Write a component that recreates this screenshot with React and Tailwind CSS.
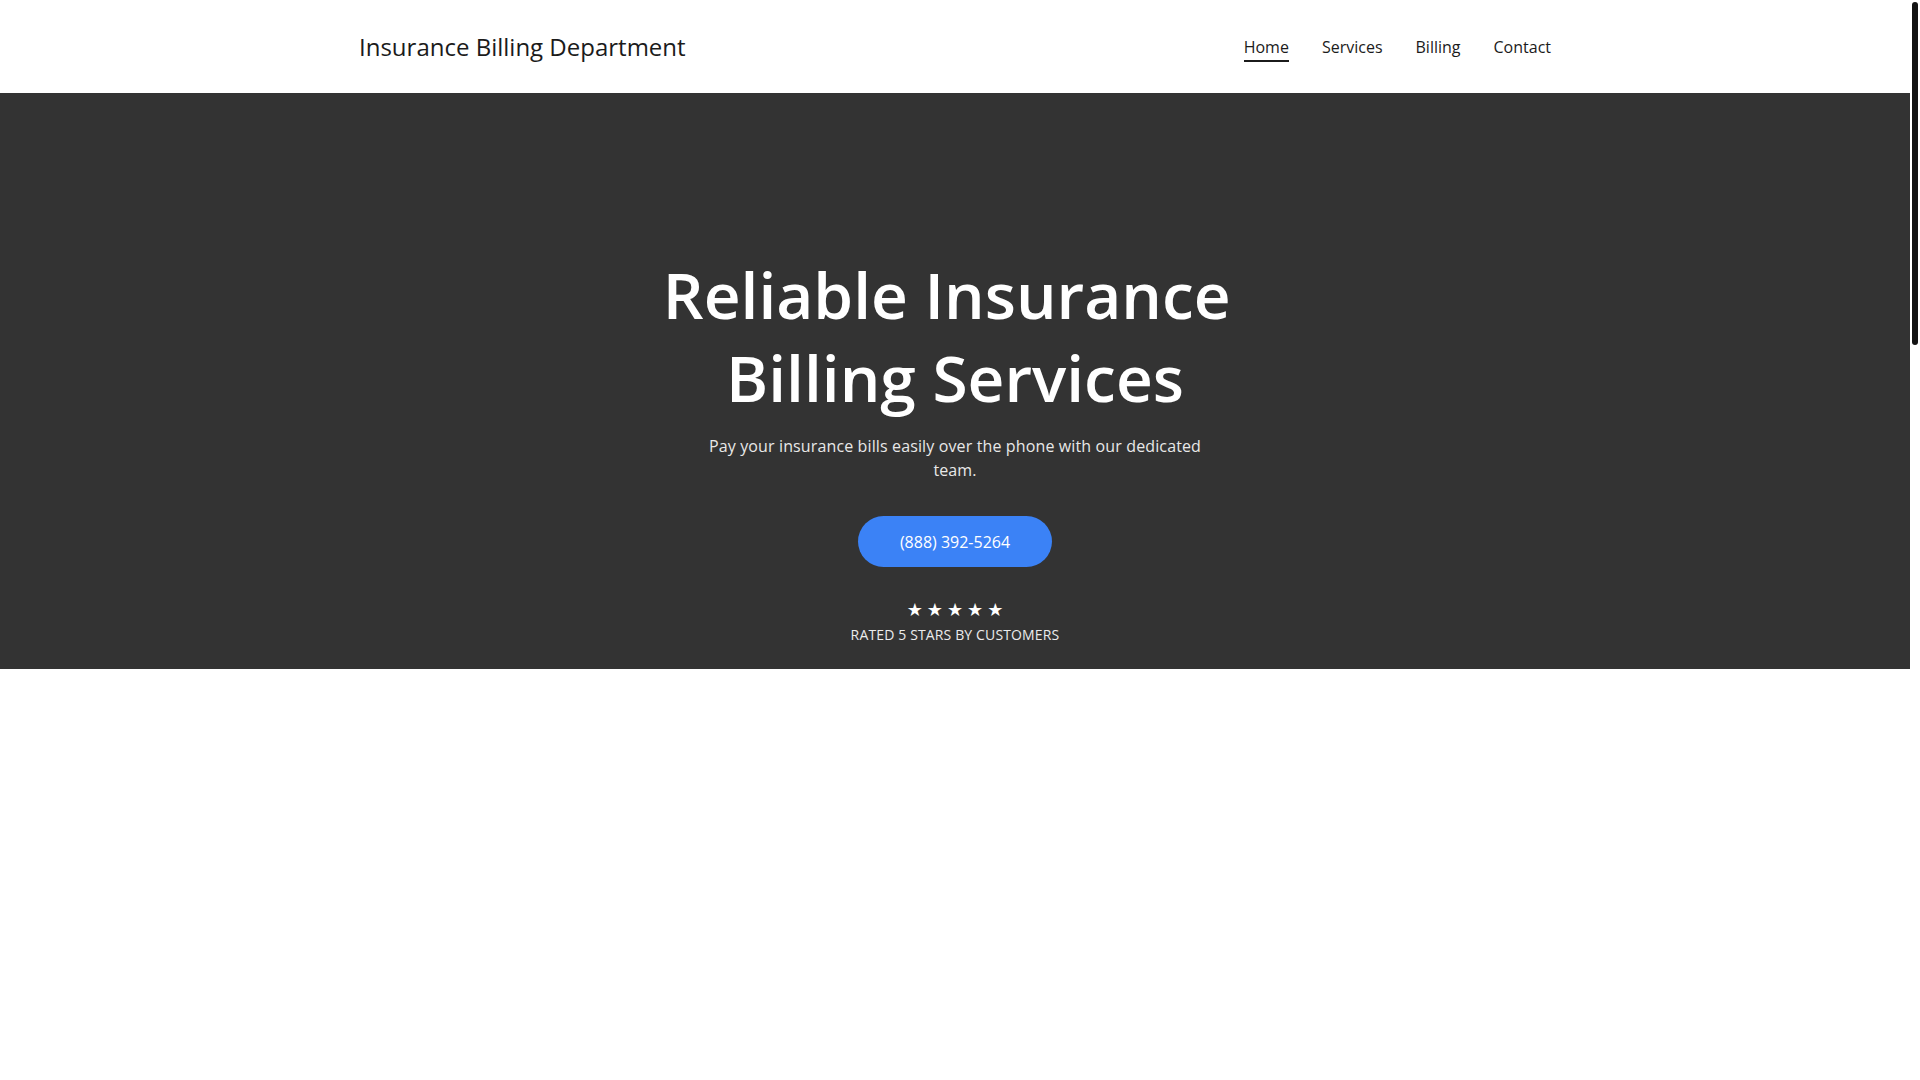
const links = [
  { label: 'Home', active: true },
  { label: 'Services' },
  { label: 'Billing' },
  { label: 'Contact' },
];

export default function App() {
  return (
    <div className="flex min-h-screen bg-white font-['Open_Sans',sans-serif] text-[#1b1b1b]">
      <main className="min-w-0 flex-1">
        {/* Header */}
        <header className="h-[93px]">
          <div className="mx-auto flex h-full max-w-[1192px] items-center justify-between">
            <a href="#" className="text-[24px] leading-8 text-[#1b1b1b]">
              Insurance Billing Department
            </a>
            <nav className="mt-1 flex items-center gap-[33px]">
              {links.map((link) => (
                <a
                  key={link.label}
                  href="#"
                  className={
                    link.active
                      ? 'border-b-2 border-[#1b1b1b] pb-[1px] text-[16px] leading-6'
                      : 'border-b-2 border-transparent pb-[1px] text-[16px] leading-6'
                  }
                >
                  {link.label}
                </a>
              ))}
            </nav>
          </div>
        </header>

        {/* Hero */}
        <section className="flex flex-col items-center bg-[#333333] px-6 pt-[160px] pb-[24px] text-center text-white">
          <h1 className="max-w-[640px] text-[64px] font-semibold leading-[83px]">
            {'Reliable Insurance\u00a0 Billing Services'}
          </h1>
          <p className="mt-[15px] max-w-[530px] text-[16px] leading-6 tracking-[0.13px] text-[#e8e8e8]">
            Pay your insurance bills easily over the phone with our dedicated team.
          </p>
          <a
            href="#"
            className="mt-[34px] flex h-[51px] items-center rounded-full bg-[#3b82f6] px-[42px] text-[16px] leading-6 text-white"
          >
            (888) 392-5264
          </a>
          <div className="mt-[33px] pl-[4px] font-['DejaVu_Sans',sans-serif] text-[18px] leading-5 tracking-[4px] text-white">
            ★★★★★
          </div>
          <div className="mt-[5px] text-[14px] uppercase leading-5 tracking-[0.01em] text-[#ececec]">
            Rated 5 stars by customers
          </div>
        </section>
      </main>

      {/* scroll indicator */}
      <aside className="w-[10px] shrink-0 bg-white px-[2px] pt-[2px]">
        <div className="h-[343px] rounded-full bg-[#121212]" />
      </aside>
    </div>
  );
}
